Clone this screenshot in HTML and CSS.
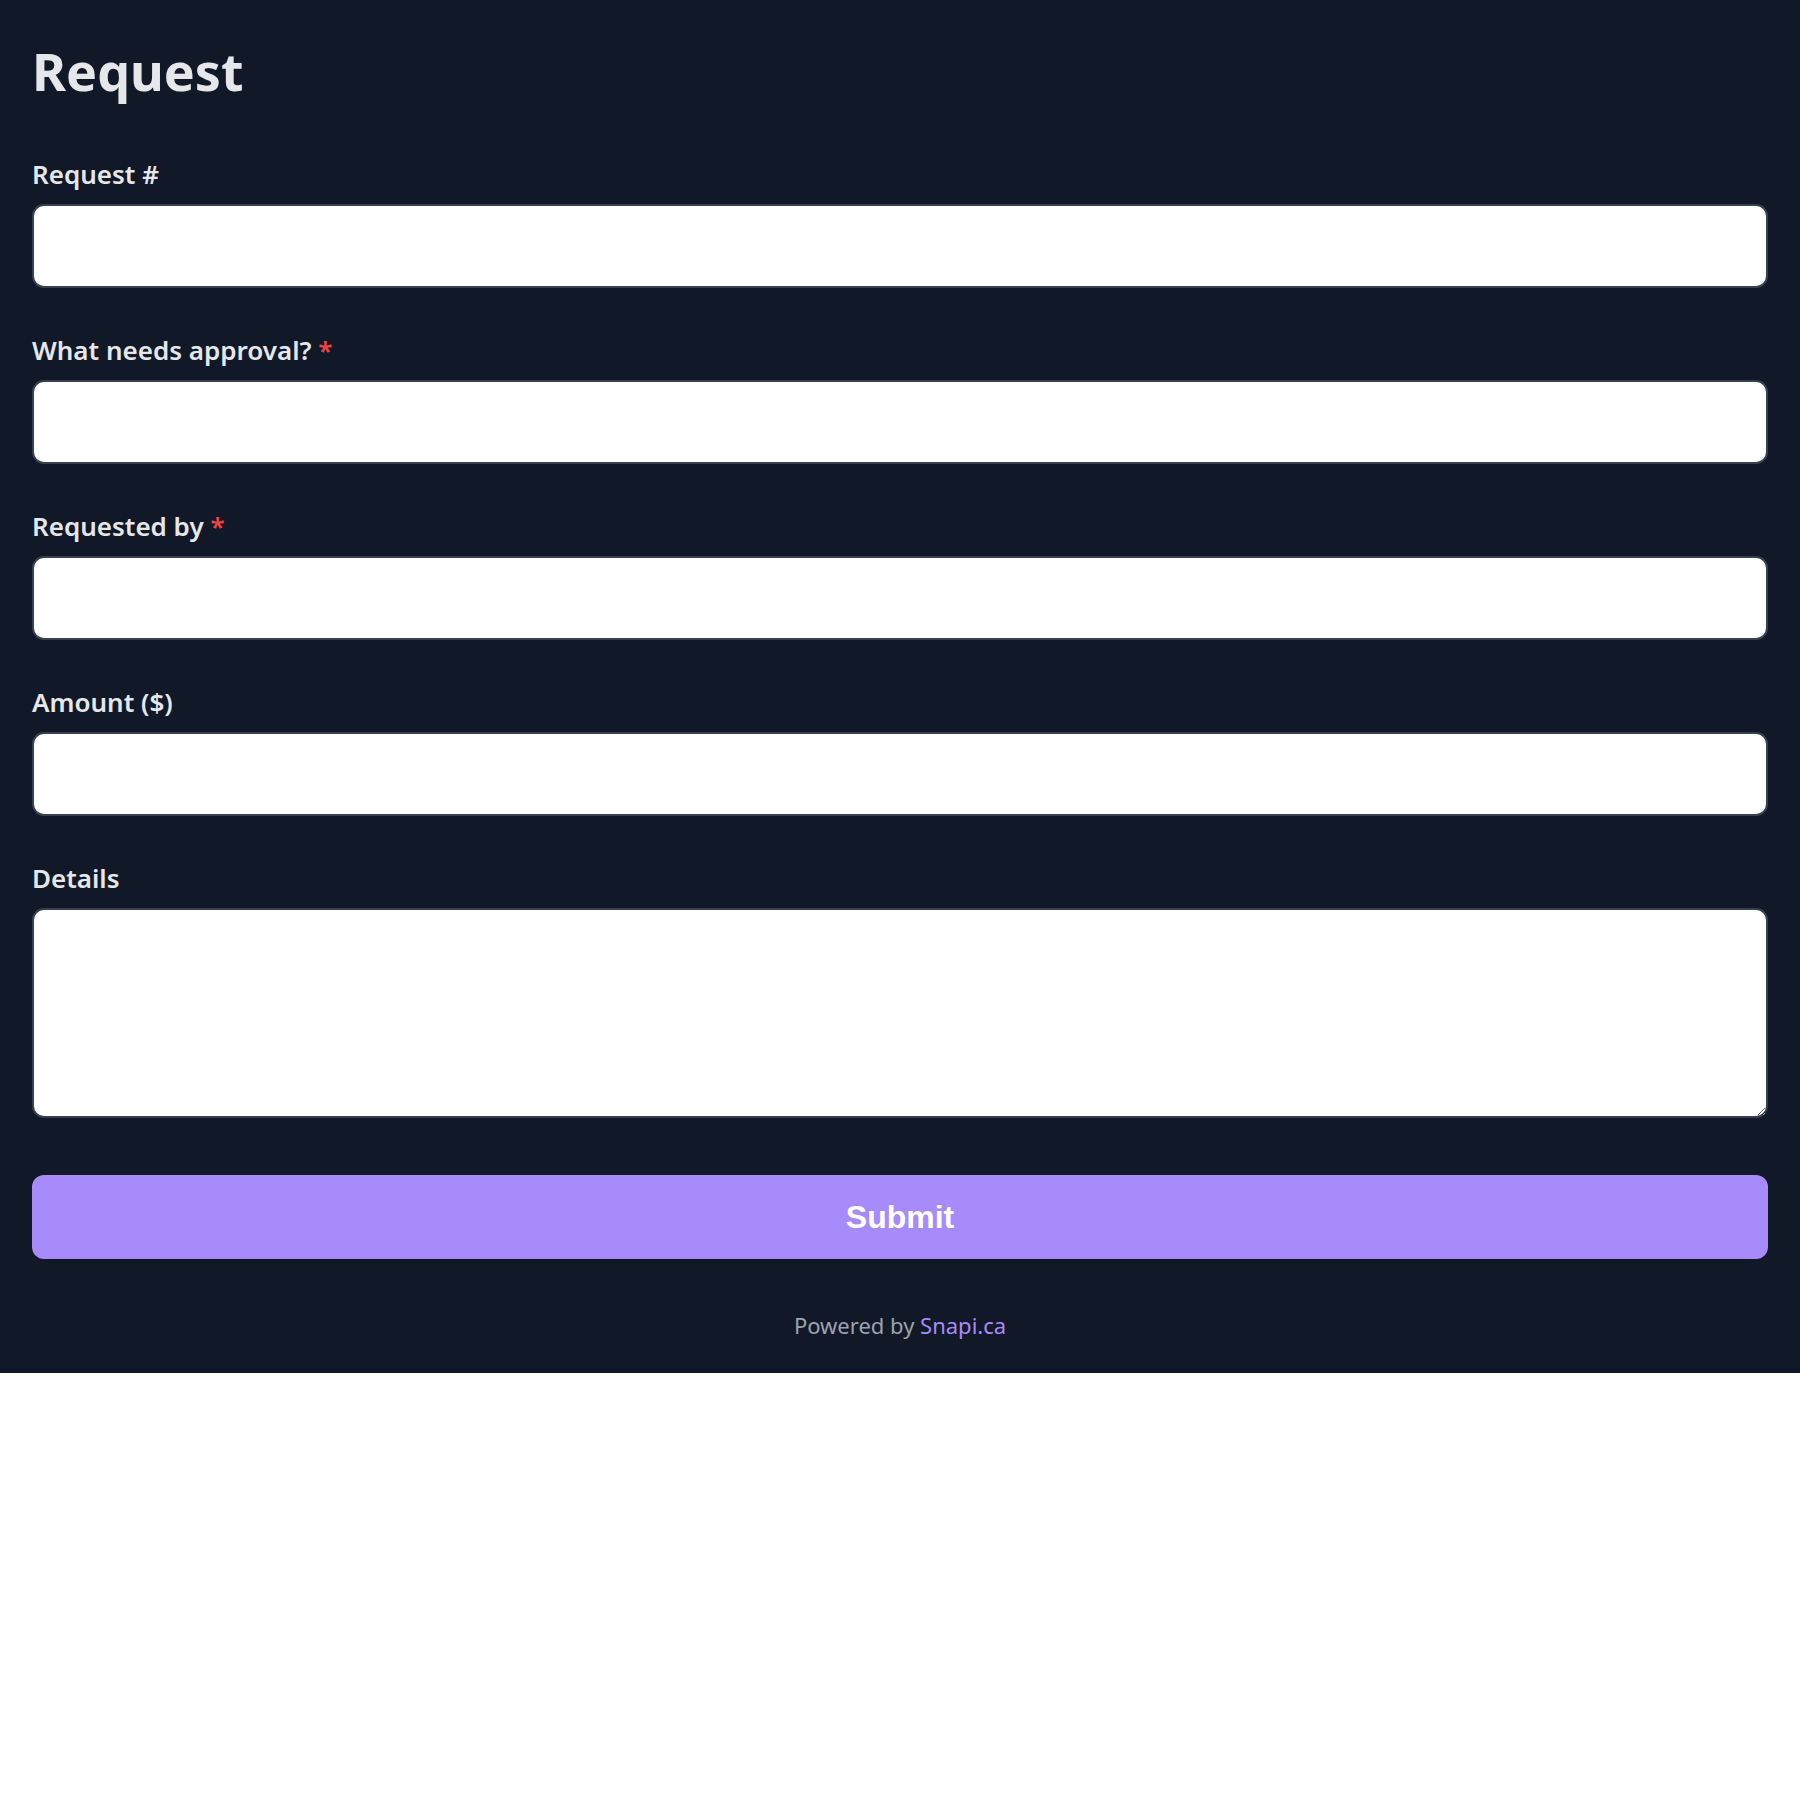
FILE: index.html
```html
<!DOCTYPE html>
<html lang="en">
<head>
    <meta charset="UTF-8">
    <meta name="viewport" content="width=device-width, initial-scale=1.0">
    <title>Request</title>
    <link rel="stylesheet" href="styles.css">
</head>
<body>
    <div class="page">
        <h1 class="title">Request</h1>

        <form class="request-form" onsubmit="return false;">
            <div class="field">
                <label for="requestNo">Request #</label>
                <input type="text" id="requestNo" class="input">
            </div>
            <div class="field">
                <label for="approvalItem">What needs approval? <span class="required">*</span></label>
                <input type="text" id="approvalItem" class="input" required>
            </div>
            <div class="field">
                <label for="requestedBy">Requested by <span class="required">*</span></label>
                <input type="text" id="requestedBy" class="input" required>
            </div>
            <div class="field">
                <label for="amount">Amount ($)</label>
                <input type="number" id="amount" class="input">
            </div>
            <div class="field">
                <label for="details">Details</label>
                <textarea id="details" class="input textarea"></textarea>
            </div>

            <button type="submit" class="submit">Submit</button>
        </form>

        <!-- Footer -->
        <p class="powered">Powered by <a href="#" class="brand">Snapi.ca</a></p>
    </div>
</body>
</html>
```

FILE: styles.css
```css
/* Page shell */
body {
    margin: 0;
    background-color: #ffffff;
    font-family: "Noto Sans", "Open Sans", sans-serif;
}

.page {
    background-color: #111827;
    color: #e5e7eb;
    padding: 41px 32px 32px;
}

.title {
    margin: 0 0 55px;
    font-size: 52px;
    line-height: 60px;
    font-weight: 700;
    color: #e5e7eb;
}

/* Form */
.request-form {
    display: flex;
    flex-direction: column;
    gap: 44px;
}

.field {
    display: flex;
    flex-direction: column;
    gap: 12px;
}

.field label {
    font-size: 26px;
    line-height: 36px;
    font-weight: 600;
    color: #e5e7eb;
}

.required {
    color: #ef4444;
}

.input {
    box-sizing: border-box;
    width: 100%;
    height: 84px;
    margin: 0;
    padding: 12px 18px;
    border: 2px solid #374151;
    border-radius: 12px;
    background-color: #ffffff;
    font-family: inherit;
    font-size: 24px;
    color: #111827;
}

.textarea {
    height: 210px;
    resize: vertical;
}

.submit {
    height: 84px;
    margin-top: 13px;
    border: none;
    border-radius: 12px;
    background-color: #a78bfa;
    color: #ffffff;
    font-family: "Liberation Sans", Arial, sans-serif;
    font-size: 32px;
    font-weight: 700;
    cursor: pointer;
}

.powered {
    margin: 51px 0 0;
    text-align: center;
    font-size: 22px;
    line-height: 31px;
    color: #9ca3af;
}

.brand {
    color: #a78bfa;
    text-decoration: none;
}
```
